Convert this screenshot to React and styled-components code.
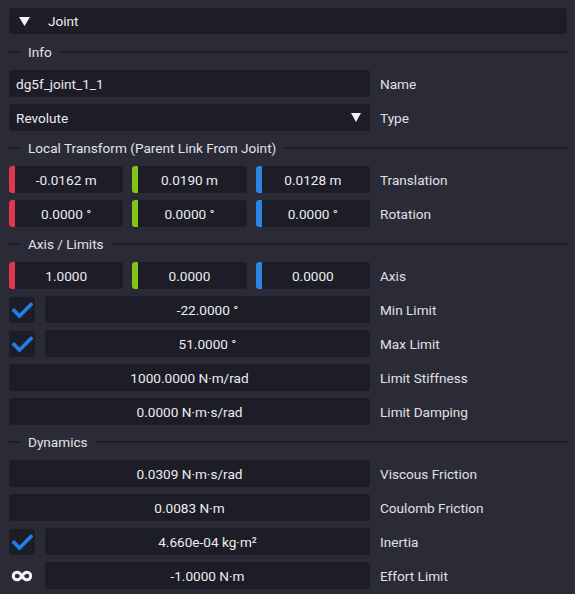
import React from "react";
import styled, { createGlobalStyle } from "styled-components";

const Global = createGlobalStyle`
  html, body { margin: 0; padding: 0; background: #2a2b37; }
  body { font-family: Roboto, "Noto Sans", sans-serif; font-size: 13.6px; color: #e6e6ea; }
`;

const Page = styled.div`
  display: flex;
  flex-direction: column;
  gap: 7px;
  padding: 8px;
  width: 575px;
  box-sizing: border-box;
`;

const Header = styled.div`
  height: 26px;
  margin: 0 0 1px 1px;
  background: #1c1d26;
  border-radius: 3px;
  display: flex;
  align-items: center;
  padding-left: 10px;
  gap: 18px;
  color: #ececf0;
`;

const Sep = styled.div`
  height: 21px;
  box-sizing: border-box;
  padding-bottom: 1px;
  display: flex;
  align-items: center;
  gap: 9px;
  color: #e2e2e6;
  &::before {
    content: "";
    width: 11px;
    height: 2px;
    background: #1b1c24;
  }
  &::after {
    content: "";
    flex: 1;
    height: 2px;
    background: #1b1c24;
  }
`;

const Row = styled.div`
  display: flex;
  align-items: center;
  height: 27px;
  padding-left: 1px;
`;

const Fields = styled.div`
  width: 361px;
  display: flex;
  gap: ${(p) => p.$gap ?? 9}px;
  height: 100%;
`;

const Field = styled.div`
  position: relative;
  flex: 1;
  background: #1c1d26;
  border-radius: 3px;
  display: flex;
  align-items: center;
  justify-content: ${(p) => (p.$left ? "flex-start" : "center")};
  padding: ${(p) => (p.$left ? "0 9px 0 7px" : "0")};
  color: #ececf0;
  white-space: nowrap;
  overflow: hidden;
`;

const Bar = styled.span`
  position: absolute;
  left: -1px;
  top: 0;
  bottom: 0;
  width: 7px;
  border-radius: 3px 0 0 3px;
  background: ${(p) => p.$c};
`;

const Label = styled.div`
  margin-left: 10px;
  color: #e0e0e4;
`;

const Check = styled.div`
  width: 26px;
  height: 26px;
  flex: 0 0 26px;
  align-self: center;
  border-radius: 3px;
  background: ${(p) => (p.$plain ? "transparent" : "#1c1d26")};
  display: flex;
  align-items: center;
  justify-content: center;
`;

const DropArrow = styled.svg`
  margin-left: auto;
`;

const colors = ["#e2354f", "#7fc51b", "#2c86e3"];

const Tri = ({ w = 11, h = 9 }) => (
  <svg width={w} height={h} viewBox={`0 0 ${w} ${h}`}>
    <polygon points={`0,0 ${w},0 ${w / 2},${h}`} fill="#f4f4f6" />
  </svg>
);

const Tick = () => (
  <svg width="22" height="18" viewBox="0 0 22 18">
    <path d="M3 9.5 L8.5 15 L20 3.5" stroke="#1f80e8" strokeWidth="3.6" fill="none" strokeLinecap="square" />
  </svg>
);

const Inf = () => (
  <svg width="22" height="12" viewBox="0 0 22 12">
    <path
      d="M6 2.2 C3.8 2.2 2.3 3.8 2.3 6 C2.3 8.2 3.8 9.8 6 9.8 C8.5 9.8 10 7.5 11 6 C12 4.5 13.5 2.2 16 2.2 C18.2 2.2 19.7 3.8 19.7 6 C19.7 8.2 18.2 9.8 16 9.8 C13.5 9.8 12 7.5 11 6 C10 4.5 8.5 2.2 6 2.2 Z"
      stroke="#f4f4f6"
      strokeWidth="3"
      fill="none"
    />
  </svg>
);

const Vec = ({ values, label }) => (
  <Row>
    <Fields>
      {values.map((v, i) => (
        <Field key={i}>
          <Bar $c={colors[i]} />
          {v}
        </Field>
      ))}
    </Fields>
    <Label>{label}</Label>
  </Row>
);

const Single = ({ value, label, lead }) => (
  <Row>
    <Fields $gap={10}>
      {lead === "check" && (
        <Check>
          <Tick />
        </Check>
      )}
      {lead === "inf" && (
        <Check $plain>
          <Inf />
        </Check>
      )}
      <Field>{value}</Field>
    </Fields>
    <Label>{label}</Label>
  </Row>
);

export default function App() {
  return (
    <>
      <Global />
      <Page>
        <Header>
          <Tri w={11} h={9} />
          <span>Joint</span>
        </Header>
        <Sep>Info</Sep>
        <Row>
          <Fields>
            <Field $left>dg5f_joint_1_1</Field>
          </Fields>
          <Label>Name</Label>
        </Row>
        <Row>
          <Fields>
            <Field $left>
              Revolute
              <DropArrow width="10" height="9" viewBox="0 0 10 9">
                <polygon points="0,0 10,0 5,9" fill="#f4f4f6" />
              </DropArrow>
            </Field>
          </Fields>
          <Label>Type</Label>
        </Row>
        <Sep>Local Transform (Parent Link From Joint)</Sep>
        <Vec values={["-0.0162 m", "0.0190 m", "0.0128 m"]} label="Translation" />
        <Vec values={["0.0000 °", "0.0000 °", "0.0000 °"]} label="Rotation" />
        <Sep>Axis / Limits</Sep>
        <Vec values={["1.0000", "0.0000", "0.0000"]} label="Axis" />
        <Single lead="check" value="-22.0000 °" label="Min Limit" />
        <Single lead="check" value="51.0000 °" label="Max Limit" />
        <Single value="1000.0000 N·m/rad" label="Limit Stiffness" />
        <Single value="0.0000 N·m·s/rad" label="Limit Damping" />
        <Sep>Dynamics</Sep>
        <Single value="0.0309 N·m·s/rad" label="Viscous Friction" />
        <Single value="0.0083 N·m" label="Coulomb Friction" />
        <Single lead="check" value="4.660e-04 kg·m²" label="Inertia" />
        <Single lead="inf" value="-1.0000 N·m" label="Effort Limit" />
      </Page>
    </>
  );
}
